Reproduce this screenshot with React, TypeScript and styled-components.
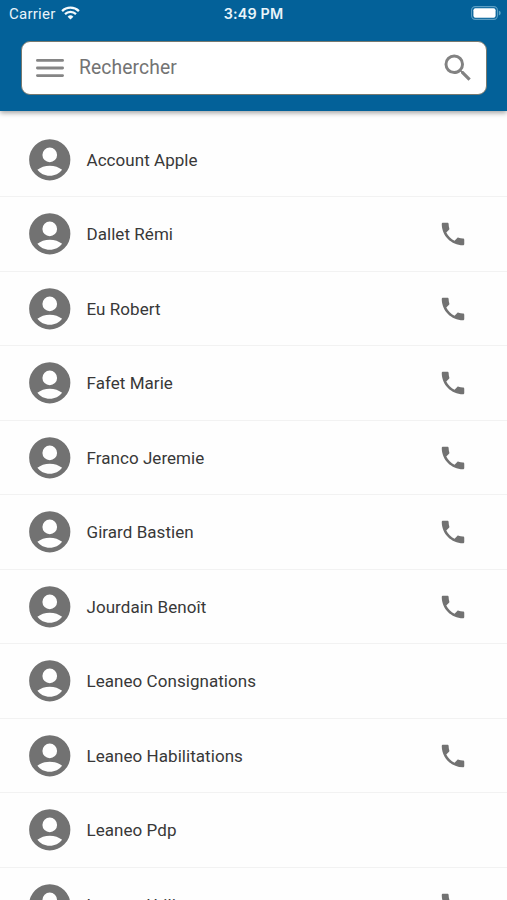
import React from "react";
import styled, { createGlobalStyle } from "styled-components";

const GlobalStyle = createGlobalStyle`
  * { box-sizing: border-box; }
  html, body { margin: 0; padding: 0; background: #fefefe; }
  body { font-family: Roboto, "Liberation Sans", sans-serif; overflow: hidden; }
`;

const Screen = styled.div`
  width: 507px;
  height: 900px;
  overflow: hidden;
  background: #fefefe;
`;

const Header = styled.header`
  height: 111px;
  background: #036199;
  box-shadow: 0 2px 5px rgba(0, 0, 0, 0.36);
`;

const StatusBar = styled.div`
  display: grid;
  grid-template-columns: 1fr auto 1fr;
  align-items: center;
  height: 27px;
  padding: 0 6px 0 9px;
  color: #e9f4fa;
`;

const Carrier = styled.div`
  display: flex;
  align-items: center;
  gap: 5px;
  padding-top: 1px;
  font-size: 15px;
  letter-spacing: 0.25px;

  svg {
    margin-top: -2px;
  }
`;

const Clock = styled.div`
  margin-right: 3px;
  font-family: Inter, sans-serif;
  font-size: 14.3px;
  font-weight: 600;
  letter-spacing: 0.2px;
`;

const Battery = styled.div`
  display: flex;
  justify-self: end;
  margin-top: -1px;
`;

const SearchBar = styled.div`
  display: flex;
  align-items: center;
  width: 466px;
  height: 54px;
  margin: 14px 0 0 21px;
  padding: 0 10px 0 14px;
  border: 1px solid #77796f;
  border-radius: 9px;
  background: #fff;
`;

const Placeholder = styled.span`
  flex: 1;
  margin-left: 15px;
  color: #737373;
  font-size: 19.3px;
  letter-spacing: 0.1px;
  line-height: 24px;
`;

const Icon = styled.svg<{ $size: number; $color?: string }>`
  display: block;
  flex: none;
  width: ${(p) => p.$size}px;
  height: ${(p) => p.$size}px;
  fill: ${(p) => p.$color ?? "#727272"};
`;

const List = styled.ul`
  margin: 0;
  padding: 11.8px 0 0;
  list-style: none;
`;

const Row = styled.li`
  display: flex;
  align-items: center;
  height: 74.53px;
  padding: 0 39px 0 25px;
  border-bottom: 1px solid #f2f2f2;
`;

const Name = styled.span`
  flex: 1;
  margin-left: 12px;
  padding-top: 0.3px;
  color: #383838;
  font-size: 17px;
  letter-spacing: 0.05px;
  line-height: 24px;
`;

type Contact = { name: string; phone: boolean };

const contacts: Contact[] = [
  { name: "Account Apple", phone: false },
  { name: "Dallet Rémi", phone: true },
  { name: "Eu Robert", phone: true },
  { name: "Fafet Marie", phone: true },
  { name: "Franco Jeremie", phone: true },
  { name: "Girard Bastien", phone: true },
  { name: "Jourdain Benoît", phone: true },
  { name: "Leaneo Consignations", phone: false },
  { name: "Leaneo Habilitations", phone: true },
  { name: "Leaneo Pdp", phone: false },
  { name: "Leaneo Utilisateur", phone: true },
];

const WifiIcon = () => (
  <svg width="19" height="14" viewBox="0 0 19 14" fill="none" stroke="#f4fafd">
    <path d="M1.1 5.1a12 12 0 0 1 16.8 0" strokeWidth="2.3" />
    <path d="M4 8.1a7.8 7.8 0 0 1 11 0" strokeWidth="2.2" />
    <path d="M9.5 13.6 6.6 10.7a4.1 4.1 0 0 1 5.8 0Z" fill="#f4fafd" stroke="none" />
  </svg>
);

const BatteryIcon = () => (
  <svg width="30" height="14" viewBox="0 0 30 14">
    <rect x="0.6" y="0.6" width="25.8" height="12.8" rx="3.6" fill="none" stroke="#5c9fc4" strokeWidth="1.1" />
    <rect x="2.4" y="2.3" width="22.2" height="9.4" rx="2" fill="#fff" />
    <path d="M27.8 4.6c1.3.5 1.9 1.4 1.9 2.4s-.6 1.9-1.9 2.4Z" fill="#5ba7c6" />
  </svg>
);

const MenuIcon = () => (
  <svg width="28" height="20" viewBox="0 0 28 20" stroke="#858585" strokeWidth="2.8" strokeLinecap="round">
    <path d="M1.4 2.4h25.2M1.4 10h25.2M1.4 17.6h25.2" />
  </svg>
);

const SearchIcon = () => (
  <Icon viewBox="0 0 24 24" $size={36} $color="#828282">
    <path d="M15.5 14h-.79l-.28-.27A6.471 6.471 0 0 0 16 9.5 6.5 6.5 0 1 0 9.5 16c1.61 0 3.09-.59 4.23-1.57l.27.28v.79l5 4.99L20.49 19l-4.99-5zm-6 0C7.01 14 5 11.99 5 9.5S7.01 5 9.5 5 14 7.01 14 9.5 11.99 14 9.5 14z" />
  </Icon>
);

const AvatarIcon = () => (
  <Icon viewBox="0 0 24 24" $size={49.5}>
    <path
      fillRule="evenodd"
      d="M12 2a10 10 0 1 0 0 20 10 10 0 0 0 0-20zM12 6.1a3.55 3.55 0 1 1 0 7.1 3.55 3.55 0 0 1 0-7.1zM6 16.9C7.5 15.6 9.7 14.85 12 14.85s4.5.75 6 2.05c-1.4 1.8-3.5 2.9-6 2.9s-4.6-1.1-6-2.9z"
    />
  </Icon>
);

const PhoneIcon = () => (
  <Icon viewBox="0 0 24 24" $size={30}>
    <path d="M6.62 10.79c1.44 2.83 3.76 5.14 6.59 6.59l2.2-2.2c.27-.27.67-.36 1.02-.24 1.12.37 2.33.57 3.57.57.55 0 1 .45 1 1V20c0 .55-.45 1-1 1-9.39 0-17-7.61-17-17 0-.55.45-1 1-1h3.5c.55 0 1 .45 1 1 0 1.25.2 2.45.57 3.57.11.35.03.74-.25 1.02l-2.2 2.2z" />
  </Icon>
);

export default function App() {
  return (
    <Screen>
      <GlobalStyle />
      <Header>
        <StatusBar>
          <Carrier>
            Carrier <WifiIcon />
          </Carrier>
          <Clock>3:49 PM</Clock>
          <Battery>
            <BatteryIcon />
          </Battery>
        </StatusBar>
        <SearchBar>
          <MenuIcon />
          <Placeholder>Rechercher</Placeholder>
          <SearchIcon />
        </SearchBar>
      </Header>
      <List>
        {contacts.map((c) => (
          <Row key={c.name}>
            <AvatarIcon />
            <Name>{c.name}</Name>
            {c.phone && <PhoneIcon />}
          </Row>
        ))}
      </List>
    </Screen>
  );
}
